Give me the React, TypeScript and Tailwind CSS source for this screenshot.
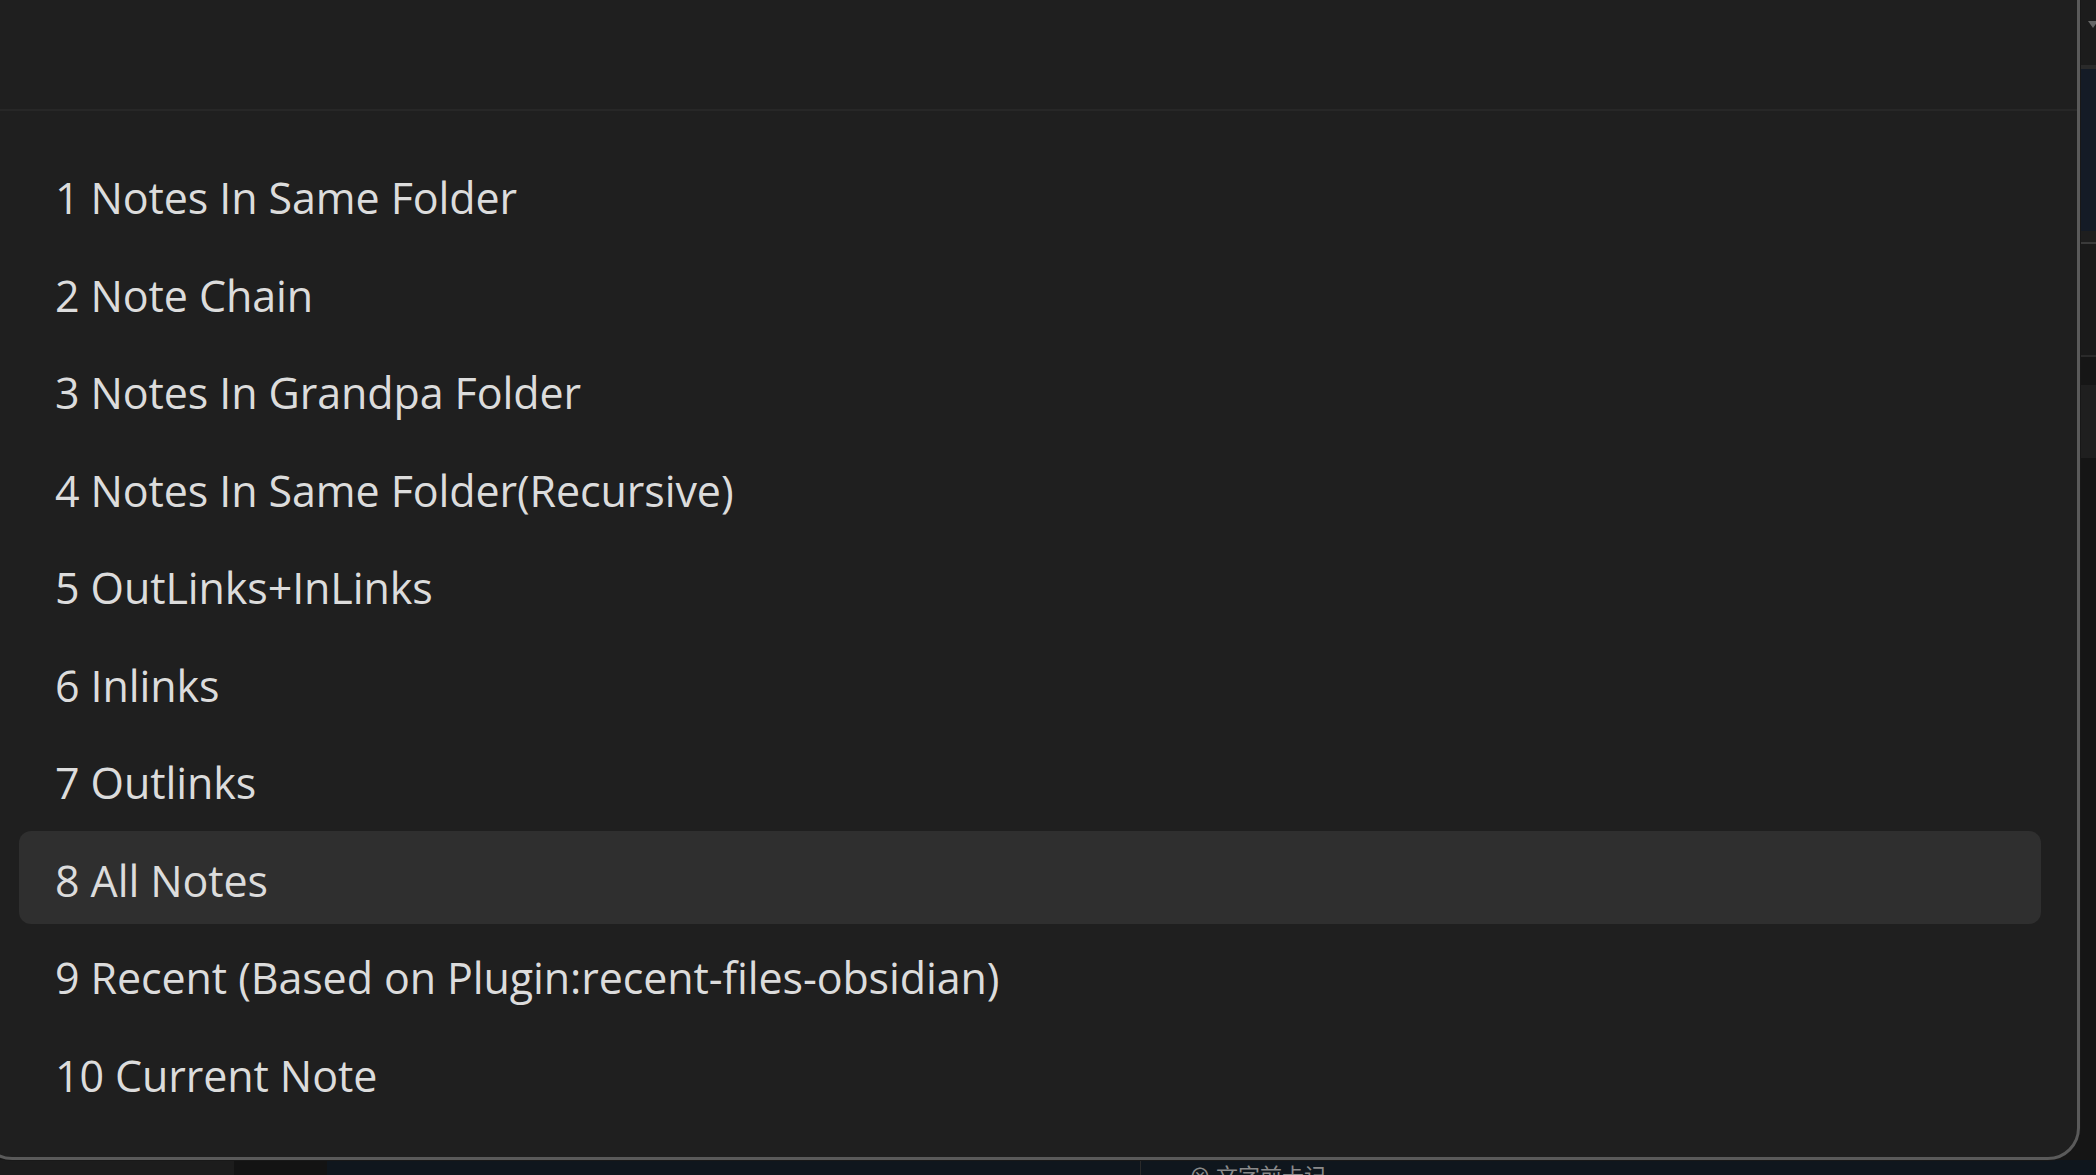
const items = [
  '1 Notes In Same Folder',
  '2 Note Chain',
  '3 Notes In Grandpa Folder',
  '4 Notes In Same Folder(Recursive)',
  '5 OutLinks+InLinks',
  '6 Inlinks',
  '7 Outlinks',
  '8 All Notes',
  '9 Recent (Based on Plugin:recent-files-obsidian)',
  '10 Current Note',
];

const selected = 7;

export default function App() {
  return (
    <div className="relative h-[1175px] w-[2096px] overflow-hidden bg-[#111820] font-['Open_Sans','Noto_Sans',sans-serif]">
      {/* app behind the modal */}
      <div className="flex h-full flex-col">
        <div className="flex flex-1">
          <div className="flex-1 bg-[#161616]" />
          <div className="flex w-[16px] flex-col">
            <div className="relative h-[65px] bg-[#1c1c1c]">
              <div className="ml-[8px] mt-[21px] h-0 w-0 border-x-[5px] border-t-[7px] border-x-transparent border-t-[#666]" />
            </div>
            <div className="h-[4px] bg-[#2a2a2a]" />
            <div className="h-[162px] bg-[#141b26]" />
            <div className="h-[11px] bg-[#1e1e1e]" />
            <div className="h-[2px] bg-[#3a3a3a]" />
            <div className="h-[111px] bg-[#1a1a1a]" />
            <div className="h-[2px] bg-[#2a2a2a]" />
            <div className="h-[28px] bg-[#161616]" />
            <div className="h-[73px] bg-[#1f1f1f]" />
            <div className="flex-1 bg-[#151515]" />
          </div>
        </div>
        <div className="flex h-[15px]">
          <div className="w-[234px] bg-[#1c1c1c]" />
          <div className="w-[93px] bg-[#131313]" />
          <div className="flex flex-1 bg-[#0f161d]">
            <div className="ml-[813px] w-px bg-[#2a2a2a]" />
            <div className="ml-[48px] mt-[3px] text-[22px] leading-none text-[#8a8a8a] font-['Noto_Sans_CJK_SC',sans-serif]">
              ⊗ 文字前卡记
            </div>
          </div>
        </div>
      </div>

      {/* suggestion modal */}
      <div className="absolute left-[-20px] top-[-40px] w-[2100px] rounded-[32px] border-[3px] border-[#5a5a5a] bg-[#1f1f1f] shadow-[0_0_0_1px_#181818]">
        <div className="h-[148px] border-b-2 border-[#272727]" />
        <div className="flex flex-col gap-[4.5px] px-[36px] pb-[38px] pt-[37px]">
          {items.map((label, i) => (
            <div
              key={i}
              className={
                i === selected
                  ? 'flex h-[93px] items-center rounded-[12px] bg-[#2f2f2f] px-[36px] pt-[8px] text-[43px] tracking-[-0.1px] text-[#dcdcdc]'
                  : 'flex h-[93px] items-center rounded-[12px] px-[36px] pt-[8px] text-[43px] tracking-[-0.1px] text-[#dcdcdc]'
              }
            >
              {label}
            </div>
          ))}
        </div>
      </div>
    </div>
  );
}
